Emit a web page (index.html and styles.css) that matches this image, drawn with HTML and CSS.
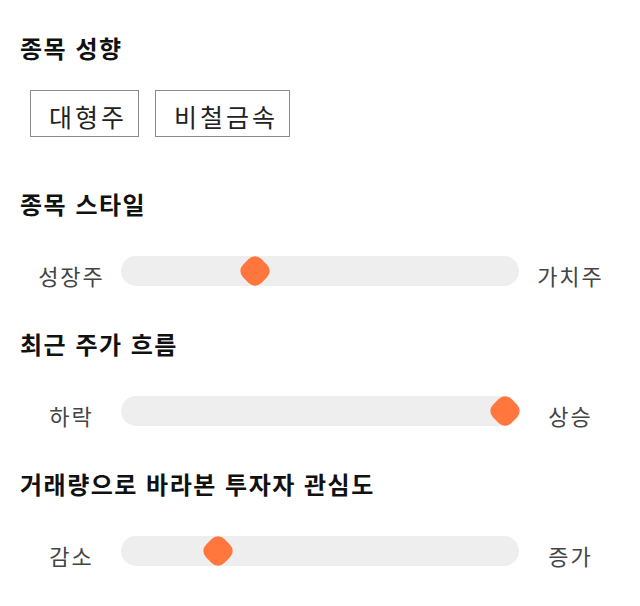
FILE: index.html
```html
<!DOCTYPE html>
<html lang="ko">
<head>
<meta charset="utf-8">
<link rel="stylesheet" href="styles.css">
</head>
<body>
<div class="page">
  <section class="sec sec-tags">
    <h2 class="title">종목 성향</h2>
    <div class="tags">
      <span class="tag">대형주</span>
      <span class="tag">비철금속</span>
    </div>
  </section>

  <section class="sec">
    <h2 class="title">종목 스타일</h2>
    <div class="row">
      <span class="lbl">성장주</span>
      <div class="track"><span class="knob" style="--v:0.324"></span></div>
      <span class="lbl">가치주</span>
    </div>
  </section>

  <section class="sec">
    <h2 class="title">최근 주가 흐름</h2>
    <div class="row">
      <span class="lbl">하락</span>
      <div class="track"><span class="knob" style="--v:1"></span></div>
      <span class="lbl">상승</span>
    </div>
  </section>

  <section class="sec">
    <h2 class="title">거래량으로 바라본 투자자 관심도</h2>
    <div class="row">
      <span class="lbl">감소</span>
      <div class="track"><span class="knob" style="--v:0.224"></span></div>
      <span class="lbl">증가</span>
    </div>
  </section>
</div>
</body>
</html>
```

FILE: styles.css
```css
html, body {
  margin: 0;
  padding: 0;
  background: #fff;
}

body {
  font-family: "Noto Sans CJK KR", "Noto Sans", sans-serif;
  color: #222;
}

.page {
  width: 600px;
  padding: 32px 20px 20px;
}

.sec {
  display: flex;
  flex-direction: column;
}

.sec + .sec {
  margin-top: 42px;
}

.sec-tags + .sec {
  margin-top: 51px;
}

.title {
  margin: 0;
  font-size: 24px;
  font-weight: 700;
  letter-spacing: 1.5px;
  line-height: 32px;
  height: 32px;
  color: #111;
  white-space: nowrap;
}

.tags {
  display: flex;
  gap: 16px;
  margin: 26px 0 0 10px;
}

.tag {
  box-sizing: border-box;
  height: 47px;
  padding: 7px 11px 0 18px;
  border: 1px solid #8a8a8a;
  font-size: 25px;
  letter-spacing: 3px;
  line-height: 37px;
  color: #222;
  white-space: nowrap;
}

.row {
  display: grid;
  grid-template-columns: 101px 1fr 101px;
  align-items: center;
  margin-top: 36px;
  height: 30px;
}

.lbl {
  text-align: center;
  font-size: 22px;
  letter-spacing: 2px;
  line-height: 30px;
  color: #444;
  padding: 4px 0 0 2px;
  margin-bottom: -4px;
  white-space: nowrap;
}

.track {
  position: relative;
  height: 30px;
  border-radius: 15px;
  background: #eeeeee;
}

.knob {
  position: absolute;
  top: 2px;
  left: calc(1.5px + var(--v) * (100% - 29px));
  width: 26px;
  height: 26px;
  border-radius: 9px;
  background: #ff773d;
  transform: rotate(45deg);
}
```
